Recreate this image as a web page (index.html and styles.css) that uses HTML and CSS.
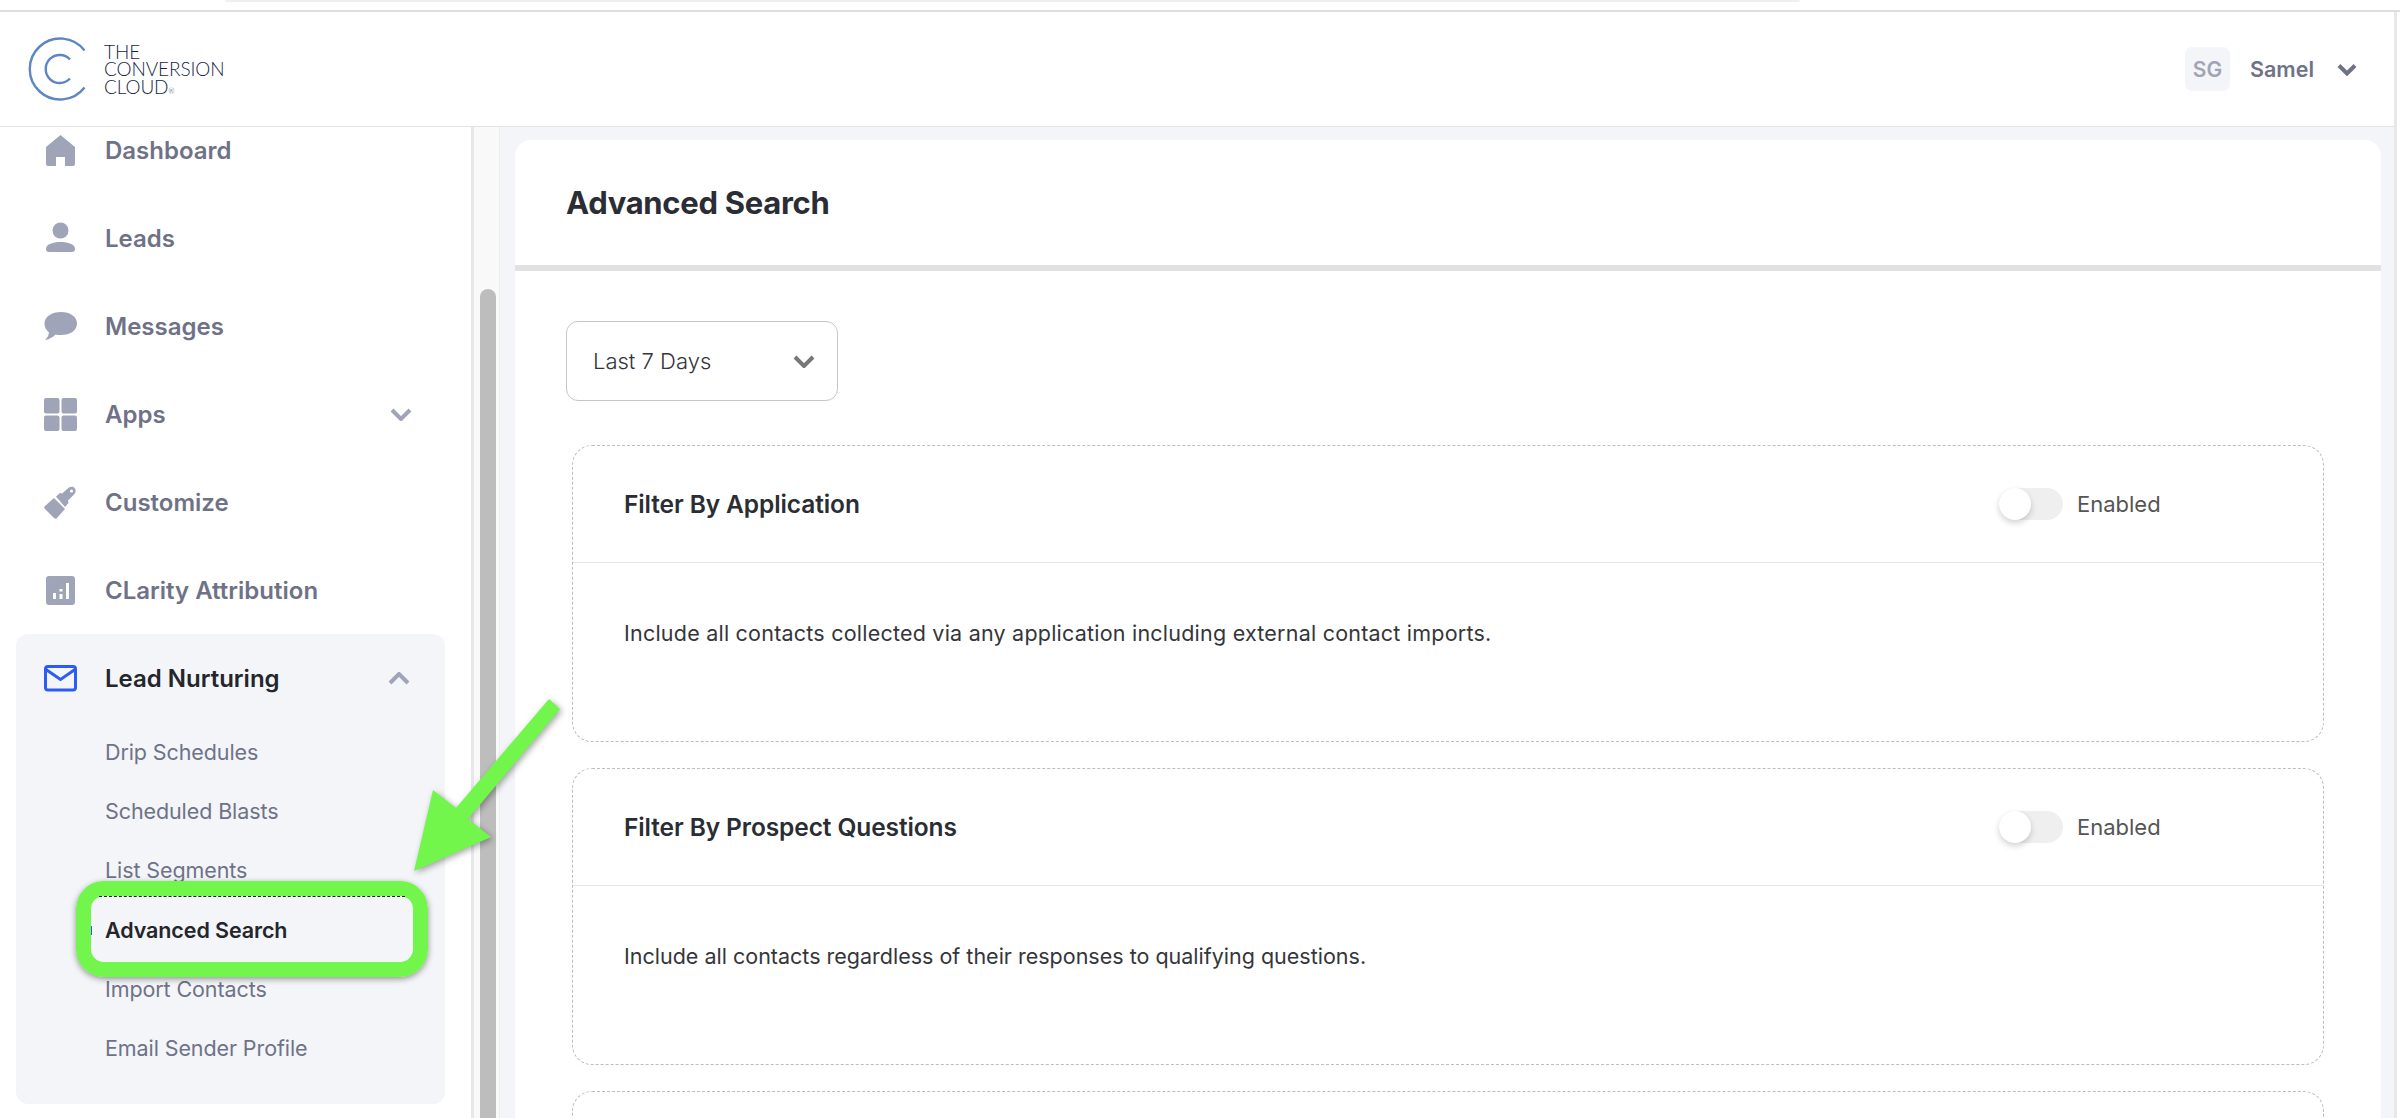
FILE: index.html
```html
<!DOCTYPE html>
<html lang="en">
<head>
<meta charset="utf-8">
<title>Advanced Search</title>
<link rel="stylesheet" href="styles.css">
</head>
<body>
<div class="topstrip"><div class="topstrip-bar"></div></div>
<div class="app">
  <header class="header">
    <div class="logo">
      <svg class="logo-mark" viewBox="0 0 62 68" fill="none" stroke="#5f86c4" stroke-width="2.4">
        <path d="M58.500 15.500A30.500 30.500 0 1 0 58.500 52.500"/>
        <path d="M44 24.500A14 14 0 1 0 44 43.500"/>
      </svg>
      <div class="logo-text">THE<br>CONVERSION<br>CLOUD<sup class="logo-reg">®</sup></div>
    </div>
    <div class="user">
      <div class="avatar">SG</div>
      <span class="user-name">Samel</span>
      <svg class="user-chev" viewBox="0 0 20 13"><path d="M2 2.500l8 8 8-8" fill="none" stroke="#6f7287" stroke-width="4"/></svg>
    </div>
  </header>
  <div class="shell">
    <aside class="sidebar">
      <nav class="nav">
        <a class="nav-item"><svg class="nav-icon" viewBox="0 0 33 33"><path d="M16.500 1L31 13v17a2 2 0 0 1-2 2h-8v-9h-9v9H4a2 2 0 0 1-2-2V13z" fill="#a0a4b8"/></svg><span>Dashboard</span></a>
        <a class="nav-item"><svg class="nav-icon" viewBox="0 0 33 33"><circle cx="16.500" cy="8.500" r="8" fill="#a0a4b8"/><path d="M2 27c0-5 7-7 14.500-7S31 22 31 27c0 2-1 3-3 3H5c-2 0-3-1-3-3z" fill="#a0a4b8"/></svg><span>Leads</span></a>
        <a class="nav-item"><svg class="nav-icon" viewBox="0 0 33 33"><path d="M17 2c9 0 16 4.500 16 11.500S26 25 17 25c-2 0-4-.2-5.500-.6C9 27 5 29.500 1 30c2-1.800 3.500-4 4-7.500C2 20 .5 17 .5 13.500 .5 6.500 8 2 17 2z" fill="#a0a4b8"/></svg><span>Messages</span></a>
        <a class="nav-item"><svg class="nav-icon" viewBox="0 0 33 33" fill="#a0a4b8"><rect x="0" y="0" width="15.500" height="15.500" rx="2"/><rect x="17.500" y="0" width="15.500" height="15.500" rx="2"/><rect x="0" y="17.500" width="15.500" height="15.500" rx="2"/><rect x="17.500" y="17.500" width="15.500" height="15.500" rx="2"/></svg><span>Apps</span><svg class="nav-chev" viewBox="0 0 22 14"><path d="M2 3l9 9 9-9" fill="none" stroke="#a0a4b8" stroke-width="4"/></svg></a>
        <a class="nav-item"><svg class="nav-icon" viewBox="0 0 33 33"><path d="M1 20l9-8 11 11-8 9c-1 1-2 1-3 0l-9-9c-1-1-1-2 0-3z" fill="#a0a4b8"/><path d="M12 10.500l4-3.500 2 .5 7-6c2-1.500 5-1 6 1s1 4-1 6l-6 6 .5 2.500-3.500 4z" fill="#a0a4b8"/><circle cx="27.500" cy="5" r="1.600" fill="#fff"/></svg><span>Customize</span></a>
        <a class="nav-item"><svg class="nav-icon" viewBox="0 0 33 33"><rect x="2" y="2" width="29" height="29" rx="3" fill="#a0a4b8"/><path d="M9 19h3v6H9zM15.500 15h3v2.500h-3zM15.500 20h3v5h-3zM22 9h3v16h-3z" fill="#fff"/></svg><span>CLarity Attribution</span></a>
        <div class="nav-group">
          <a class="nav-item nav-item-active"><svg class="nav-icon" viewBox="0 0 33 33"><rect x="1.500" y="4.500" width="30" height="23.500" rx="2.500" fill="none" stroke="#2b5cf5" stroke-width="3"/><path d="M2 7.500l14.500 10L31 7.500" fill="none" stroke="#2b5cf5" stroke-width="3"/></svg><span>Lead Nurturing</span><svg class="nav-chev" viewBox="0 0 22 14"><path d="M2 11l9-9 9 9" fill="none" stroke="#a0a4b8" stroke-width="4"/></svg></a>
          <ul class="subnav">
            <li class="subnav-item">Drip Schedules</li>
            <li class="subnav-item">Scheduled Blasts</li>
            <li class="subnav-item">List Segments</li>
            <li class="subnav-item subnav-item-active">Advanced Search</li>
            <li class="subnav-item">Import Contacts</li>
            <li class="subnav-item">Email Sender Profile</li>
          </ul>
        </div>
      </nav>
    </aside>
    <div class="side-scroll"><div class="side-thumb"></div></div>
    <main class="main">
      <section class="card">
        <div class="card-head"><h1 class="card-title">Advanced Search</h1></div>
        <div class="card-body">
          <div class="select"><span>Last 7 Days</span><svg class="select-chev" viewBox="0 0 22 14"><path d="M2 3l9 9 9-9" fill="none" stroke="#777" stroke-width="4"/></svg></div>
          <div class="panels">
            <article class="panel">
              <div class="panel-head">
                <h2 class="panel-title">Filter By Application</h2>
                <div class="switch"><span class="switch-track"><span class="switch-knob"></span></span><span class="switch-label">Enabled</span></div>
              </div>
              <p class="panel-text">Include all contacts collected via any application including external contact imports.</p>
            </article>
            <article class="panel">
              <div class="panel-head">
                <h2 class="panel-title">Filter By Prospect Questions</h2>
                <div class="switch"><span class="switch-track"><span class="switch-knob"></span></span><span class="switch-label">Enabled</span></div>
              </div>
              <p class="panel-text panel-text-tight">Include all contacts regardless of their responses to qualifying questions.</p>
            </article>
            <article class="panel"></article>
          </div>
        </div>
      </section>
    </main>
    <div class="edge"></div>
  </div>
</div>
<div class="callout-box"></div>
<svg class="callout-arrow" viewBox="0 0 200 200"><polygon points="14,181 33,100 56,118 149,9 160,19 68,129 91,147" fill="#72f64c"/></svg>
</body>
</html>
```
FILE: styles.css
```css
* { box-sizing: border-box; }
html, body { margin: 0; height: 1118px; overflow: hidden; background: #fff; }
body { font-family: Inter, "Liberation Sans", sans-serif; color: #2a2d34; position: relative; }

.topstrip { height: 12px; border-bottom: 2px solid #dedede; }
.topstrip-bar { height: 2px; margin: 0 600px 0 225px; background: #f0f0f0; border-radius: 0 0 8px 8px; }

.app { height: 1106px; display: flex; flex-direction: column; }
.header { height: 115px; flex: none; display: flex; align-items: center; justify-content: space-between; padding: 0 37px 0 26px; border-bottom: 1px solid #e4e4e4; border-right: 3px solid #e8e8e8; margin-right: 3px; }
.logo { display: flex; align-items: center; gap: 16px; }
.logo-mark { width: 62px; height: 68px; display: block; }
.logo-text { font-family: Lato, sans-serif; font-weight: 300; font-size: 19px; line-height: 17.500px; color: #141f44; letter-spacing: -.1px; }
.logo-reg { font-size: 7px; line-height: 0; vertical-align: baseline; }

.user { display: flex; align-items: center; }
.avatar { width: 45px; height: 44px; border-radius: 7px; background: #f3f5f9; color: #a2a4b5; font-size: 21px; font-weight: 600; display: flex; align-items: center; justify-content: center; }
.user-name { margin-left: 20px; font-size: 21.500px; font-weight: 600; color: #6f7287; width: 63px; white-space: nowrap; }
.user-chev { width: 20px; height: 13px; margin-left: 24px; }

.shell { flex: 1; min-height: 0; display: flex; }
.sidebar { width: 471px; flex: none; overflow: hidden; background: #fff; }
.nav { margin-top: -21px; }
.nav-item { height: 88px; display: flex; align-items: center; padding: 0 59px 0 44px; color: #6f7287; font-size: 24px; font-weight: 600; }
.nav-icon { width: 33px; height: 33px; flex: none; margin-right: 28px; }
.nav-chev { width: 22px; height: 14px; margin-left: auto; }
.nav-group { margin: 0 26px 0 16px; height: 470px; background: #f3f5f9; border-radius: 12px; }
.nav-group .nav-item { padding: 0 35px 0 28px; height: 89px; }
.nav-item-active { color: #24262b; }
.subnav { list-style: none; margin: 0; padding: 0; }
.subnav-item { position: relative; height: 59.200px; line-height: 59px; padding-left: 89px; color: #6f7287; font-size: 21.500px; font-weight: 400; letter-spacing: -.1px; }
.subnav-item-active { color: #24262b; font-weight: 600; }
.subnav-item-active::before { content: ""; position: absolute; left: 75px; top: 25px; width: 1px; height: 9px; background: #2b5cf5; }

.side-scroll { width: 29px; flex: none; padding: 162px 3px 0 6px; background: #f9f9f9; border-left: 3px solid #e8e8e8; border-right: 1px solid #eee; }
.side-thumb { height: 1000px; background: #bdbdbd; border-radius: 8px 8px 0 0; }

.main { flex: 1; min-width: 0; background: #f3f5f9; padding: 13px 13px 0 15px; overflow: hidden; }
.edge { width: 6px; flex: none; background: #fff; border-left: 3px solid #e8e8e8; }
.card { height: 1100px; background: #fff; border-radius: 16px 16px 0 0; }
.card-head { height: 131px; padding-left: 51px; display: flex; align-items: center; border-bottom: 6px solid #e1e1e1; padding-bottom: 1px; }
.card-title { margin: 0; font-size: 31px; font-weight: 700; color: #2a2d34; letter-spacing: -.3px; }
.card-body { padding: 50px 57px 0 51px; }
.select { width: 272px; height: 80px; border: 1px solid #c6c6c6; border-radius: 12px; display: flex; align-items: center; justify-content: space-between; padding: 0 22px 0 26px; font-size: 22px; font-weight: 300; color: #33353b; }
.select-chev { width: 22px; height: 14px; }
.panels { margin: 44px 0 0 6px; display: flex; flex-direction: column; gap: 26px; }
.panel { height: 297px; border: 1px dashed #bdbdbd; border-radius: 20px; box-shadow: 0 3px 8px rgba(0,0,0,.012); }
.panel-head { height: 117px; border-bottom: 1px solid #e4e4e4; display: flex; align-items: center; justify-content: space-between; padding: 0 0 0 51px; }
.panel-title { margin: 0; font-size: 24.500px; font-weight: 600; color: #2a2d34; letter-spacing: -.1px; }
.switch { width: 324px; display: flex; align-items: center; }
.switch-track { position: relative; width: 64px; height: 32px; border-radius: 16px; background: #efefef; }
.switch-knob { position: absolute; left: 0; top: 0; width: 32px; height: 32px; border-radius: 50%; background: #fff; box-shadow: 0 3px 6px rgba(0,0,0,.18); }
.switch-label { margin-left: 14px; font-size: 22px; color: #555; font-weight: 400; }
.panel-text { margin: 0; padding: 55px 0 0 51px; line-height: 30px; font-size: 21.500px; color: #34363a; font-weight: 400; letter-spacing: .22px; }
.panel-text-tight { letter-spacing: 0; }

.callout-box { position: absolute; left: 76px; top: 881px; width: 352px; height: 96px; border: 15px solid #72f64c; border-radius: 28px; box-shadow: 0 2px 6px rgba(0,0,0,.4); }
.callout-box::before { content: ""; position: absolute; left: 8px; right: 8px; top: 0; border-top: 1px dashed #222; }
.callout-arrow { position: absolute; left: 400px; top: 690px; width: 200px; height: 200px; filter: drop-shadow(2px 2px 3px rgba(0,0,0,.35)); }
```
